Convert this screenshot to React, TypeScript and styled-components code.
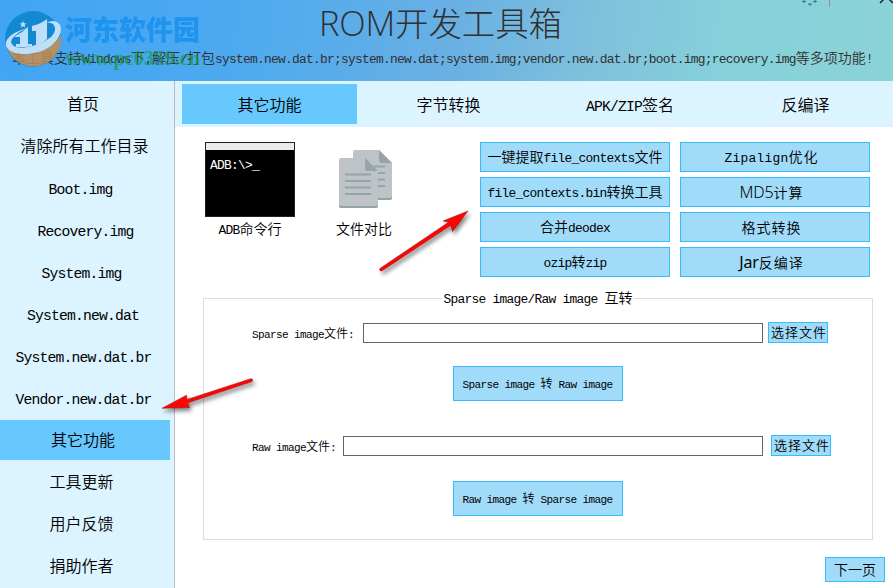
import React from "react";
import styled, { createGlobalStyle } from "styled-components";

const CJK = `"Noto Sans CJK SC"`;

const GlobalStyle = createGlobalStyle`
  *, *::before, *::after { box-sizing: border-box; }
  body { margin: 0; background: #fff; }
  button { appearance: none; cursor: pointer; margin: 0; }
`;

const Window = styled.div`
  position: relative;
  width: 893px;
  height: 588px;
  overflow: hidden;
  display: flex;
  flex-direction: column;
  background: #fff;
  color: #000;
  font-family: ${CJK}, sans-serif;
  font-weight: 350;
`;

/* Half-width runs: monospace letters tightened so that each advances half an ideograph. */
const Half = styled.span`
  font-family: "Liberation Mono", monospace;
  font-size: 0.92em;
  letter-spacing: calc(-0.0566em + var(--extra, 0px));
  font-weight: 400;
`;

const Run = styled.span`
  white-space: pre;
`;

function Mixed({ text }: { text: string }) {
  const parts = text.match(/[\x20-\x7e]+|[^\x20-\x7e]+/g) ?? [];
  return (
    <Run>
      {parts.map((p, i) =>
        /^[\x20-\x7e]/.test(p) ? <Half key={i}>{p}</Half> : p
      )}
    </Run>
  );
}

const Header = styled.header`
  position: relative;
  flex: none;
  height: 81px;
  background: linear-gradient(
    98deg,
    #41a5f5 0%,
    #4ba9f0 24%,
    #5cade9 40%,
    #68b0e4 50%,
    #7fc0dc 66%,
    #85d0da 80%,
    #8bd3d7 100%
  );
  color: #303030;
`;

const Title = styled.h1`
  margin: 0;
  padding: 0 0 0 319px;
  height: 45px;
  line-height: 44px;
  font-size: 33.4px;
  font-weight: 300;
  white-space: pre;
`;

const TitleLatin = styled.span`
  font-family: "Open Sans", sans-serif;
  font-size: 34.5px;
  letter-spacing: -0.2px;
`;

const Subtitle = styled.p`
  margin: 0;
  padding-left: 12px;
  height: 24px;
  line-height: 24px;
  font-size: 14px;
`;

const WindowControls = styled.svg`
  position: absolute;
  right: 0;
  top: 0;
`;

const Watermark = styled.div`
  position: absolute;
  left: 5px;
  top: 9px;
  display: flex;
`;

const WatermarkText = styled.div`
  display: flex;
  flex-direction: column;
  margin-left: 3px;
`;

const WatermarkName = styled.span`
  height: 37px;
  line-height: 40px;
  font-size: 27px;
  font-weight: 900;
  color: #1791ee;
  opacity: 0.85;
  white-space: nowrap;
`;

const WatermarkUrl = styled.span`
  height: 22px;
  line-height: 24px;
  font-family: "Liberation Serif", serif;
  font-size: 20.4px;
  font-weight: 700;
  color: #169a35;
  opacity: 0.62;
`;

const Body = styled.div`
  flex: 1;
  display: flex;
  min-height: 0;
`;

const Sidebar = styled.nav`
  width: 175px;
  flex: none;
  padding-top: 3px;
  display: flex;
  flex-direction: column;
  gap: 2px;
  background: #dcf4ff;
  border-right: 1px solid #bababf;
`;

const NavItem = styled.button<{ $active?: boolean; $center: number }>`
  flex: none;
  width: 170px;
  height: 40px;
  padding: 0 12px 0 ${(p) => (p.$center - 80) * 2}px;
  border: 0;
  background: ${(p) => (p.$active ? "#66c8fc" : "transparent")};
  font: inherit;
  font-size: 16px;
  line-height: 38px;
  color: #000;
  display: flex;
  justify-content: center;
`;

const Main = styled.main`
  flex: 1;
  display: flex;
  flex-direction: column;
`;

const Tabs = styled.div`
  flex: none;
  height: 46px;
  padding: 3px 0 3px 7px;
  display: grid;
  grid-template-columns: 175px 183px 180px 171px;
  background: #dcf4ff;
`;

const Tab = styled.button<{ $active?: boolean }>`
  height: 40px;
  padding: 0;
  border: 0;
  background: ${(p) => (p.$active ? "#66c8fc" : "transparent")};
  font: inherit;
  font-size: 16px;
  color: #000;
`;

const TopRow = styled.section`
  flex: none;
  display: flex;
  height: 155px;
  padding: 15px 23px 0 30px;
`;

const Tool = styled.figure<{ $width: number; $gap?: number }>`
  margin: 0 ${(p) => p.$gap ?? 0}px 0 0;
  width: ${(p) => p.$width}px;
  display: flex;
  flex-direction: column;
  align-items: center;
`;

const Terminal = styled.div`
  width: 90px;
  height: 75px;
  border: 1px solid #222;
  background: linear-gradient(#ebebeb 7px, #000 7px);
  color: #fff;
  padding: 9px 0 0 4px;
  font-size: 14px;
  line-height: 22px;
`;

const IconBox = styled.div`
  height: 75px;
  padding: 8px 0 0 2px;
`;

const Caption = styled.figcaption`
  margin-top: -1px;
  height: 24px;
  line-height: 24px;
  font-size: 14px;
  white-space: nowrap;
`;

const ButtonGrid = styled.div`
  margin-left: auto;
  display: grid;
  grid-template-columns: 190px 190px;
  grid-auto-rows: 30px;
  gap: 5px 10px;
`;

const ActionButton = styled.button<{ $spaced?: boolean }>`
  --extra: ${(p) => (p.$spaced ? "1px" : "0px")};
  display: flex;
  align-items: center;
  justify-content: center;
  padding: 0 ${(p) => (p.$spaced ? 7 : 0)}px 0 0;
  border: 1px solid #36bcfc;
  background: #a0dcfa;
  color: #000;
  font: inherit;
  font-size: 14px;
  line-height: 20px;
  letter-spacing: var(--extra);
  white-space: nowrap;
`;

const ConvertButton = styled(ActionButton)`
  width: 170px;
  height: 35px;
  padding: 0 1px 0 0;
  font-size: 12px;
`;

const PickButton = styled(ActionButton)`
  width: 60px;
  height: 21px;
  font-size: 13px;
  letter-spacing: 1px;
  padding: 0 0 1px 2px;
`;

const NextButton = styled(ActionButton)`
  width: 60px;
  height: 25px;
  padding-bottom: 1px;
`;

const Group = styled.fieldset`
  flex: none;
  width: 670px;
  height: 251px;
  margin: 7px 0 0 28px;
  padding: 0;
  border: 1px solid #dcdcdc;
  min-width: 0;
`;

const Legend = styled.legend`
  margin: 0 auto;
  padding: 0 2px;
  height: 18px;
  line-height: 16px;
  font-size: 14px;
`;

const FieldRow = styled.div<{ $top: number }>`
  display: flex;
  align-items: flex-end;
  height: 21px;
  margin: ${(p) => p.$top}px 0 0 48px;
`;

const Label = styled.label<{ $width: number }>`
  width: ${(p) => p.$width}px;
  height: 20px;
  line-height: 20px;
  font-size: 12px;
  white-space: nowrap;
`;

const PathInput = styled.input<{ $width: number; $gap: number }>`
  width: ${(p) => p.$width}px;
  height: 20px;
  margin: 0 ${(p) => p.$gap}px 0 0;
  padding: 0 4px;
  border: 1px solid #646464;
  border-radius: 0;
  background: #fff;
  font-size: 12px;
  outline: 0;
`;

const ActionRow = styled.div<{ $top: number }>`
  display: flex;
  margin: ${(p) => p.$top}px 0 0 249px;
`;

const Footer = styled.footer`
  display: flex;
  justify-content: flex-end;
  padding: 17px 8px 0 0;
`;

const Pointers = styled.svg`
  position: absolute;
  left: 0;
  top: 0;
  pointer-events: none;
  filter: drop-shadow(2px 3px 2px rgba(0, 0, 0, 0.5));
`;

const Sans = styled.span<{ $weight?: number }>`
  font-family: "Noto Sans", sans-serif;
  font-size: 16px;
  font-weight: ${(p) => p.$weight ?? 400};
  letter-spacing: -0.2px;
`;

const NAV: { label: string; center: number; active?: boolean }[] = [
  { label: "首页", center: 84 },
  { label: "清除所有工作目录", center: 85.5 },
  { label: "Boot.img", center: 81.5 },
  { label: "Recovery.img", center: 86.5 },
  { label: "System.img", center: 82.5 },
  { label: "System.new.dat", center: 84 },
  { label: "System.new.dat.br", center: 84.5 },
  { label: "Vendor.new.dat.br", center: 84.5 },
  { label: "其它功能", center: 84, active: true },
  { label: "工具更新", center: 82.5 },
  { label: "用户反馈", center: 82.5 },
  { label: "捐助作者", center: 82.5 },
];

const TABS = ["其它功能", "字节转换", "APK/ZIP签名", "反编译"];

function SiteLogo() {
  return (
    <svg width="57" height="60" viewBox="0 0 57 60" opacity="0.85">
      <circle cx="28" cy="30" r="28" fill="#0c85ce" />
      <path d="M1 36Q10 46 28 43Q48 39 56 26A28 28 0 0 1 1 36Z" fill="#c68d50" />
      <path
        d="M22 19Q7 26 6 33Q8 40 20 38.500Q36 36 46 28Q53 20 48 15Q45 13 41 14Q50 9 55 16Q58 23 51 32Q42 43 24 45Q5 46 1 37Q-1 26 22 19Z"
        fill="#d3eafc"
      />
      <path d="M10 27Q17 24 23 18V35H27V37Q18 39 11 38V35H15V28H10Z" fill="#d3eafc" />
      <path d="M27 17Q36 15 42 10V30Q38 34 31 36V22H27Z" fill="#d3eafc" />
      <path d="M18 12l1 2.200 2.400.3-1.800 1.600.5 2.400-2.100-1.200-2.100 1.200.5-2.400-1.800-1.600 2.400-.3z" fill="#d3eafc" />
    </svg>
  );
}

function DocumentsIcon() {
  return (
    <svg width="53" height="58" viewBox="0 0 53 58">
      <path d="M16 0H40L53 13V48a2 2 0 0 1-2 2H16a2 2 0 0 1-2-2V2a2 2 0 0 1 2-2Z" fill="#bdc3c7" />
      <path d="M14 47a2 2 0 0 0 2 1H51a2 2 0 0 0 2-2v2a2 2 0 0 1-2 2H16a2 2 0 0 1-2-2Z" fill="#95a5a5" />
      <path d="M40 0L53 13H42a2 2 0 0 1-2-2Z" fill="#95a5a5" />
      <path d="M33 15.500h13v2H33zM38 22h8v2h-8zM38 28.500h8v2h-8zM38 35h8v2h-8z" fill="#95a5a5" />
      <path d="M2 8H26L39 21V56a2 2 0 0 1-2 2H2a2 2 0 0 1-2-2V10a2 2 0 0 1 2-2Z" fill="#bdc3c7" />
      <path d="M0 54a2 2 0 0 0 2 2H37a2 2 0 0 0 2-2V56a2 2 0 0 1-2 2H2a2 2 0 0 1-2-2Z" fill="#95a5a5" />
      <path d="M26 8L39 21H28a2 2 0 0 1-2-2Z" fill="#95a5a5" />
      <path d="M6 23.500h26v2H6zM6 30h26v2H6zM6 36.500h26v2H6zM6 43h26v2H6z" fill="#95a5a5" />
    </svg>
  );
}

export default function App() {
  return (
    <Window>
      <GlobalStyle />
      <Header>
        <Title>
          <TitleLatin>ROM</TitleLatin>开发工具箱
        </Title>
        <Subtitle>
          <Mixed text="本工具支持Windows下,解压/打包system.new.dat.br;system.new.dat;system.img;vendor.new.dat.br;boot.img;recovery.img等多项功能!" />
        </Subtitle>
        <Watermark>
          <SiteLogo />
          <WatermarkText>
            <WatermarkName>河东软件园</WatermarkName>
            <WatermarkUrl>www.pc0359.cn</WatermarkUrl>
          </WatermarkText>
        </Watermark>
        <WindowControls width="93" height="10" viewBox="0 0 93 10">
          <path d="M2 1.500h4M4 0v3M13 1.500h4M15 0v3M8 4h4M9 5h2" stroke="#46789a" strokeWidth="1.2" fill="none" />
          <path d="M29.500 0V7" stroke="#a08c90" strokeWidth="1" />
          <path d="M80 3L84 -1M93 3L89 -1" stroke="#222" strokeWidth="1.5" />
        </WindowControls>
      </Header>
      <Body>
        <Sidebar>
          {NAV.map((n) => (
            <NavItem key={n.label} $active={n.active} $center={n.center}>
              <Mixed text={n.label} />
            </NavItem>
          ))}
        </Sidebar>
        <Main>
          <Tabs>
            {TABS.map((t, i) => (
              <Tab key={t} $active={i === 0}>
                <Mixed text={t} />
              </Tab>
            ))}
          </Tabs>
          <TopRow>
            <Tool $width={90} $gap={38}>
              <Terminal>
                <Mixed text="ADB:\>_" />
              </Terminal>
              <Caption>
                <Mixed text="ADB命令行" />
              </Caption>
            </Tool>
            <Tool $width={62}>
              <IconBox>
                <DocumentsIcon />
              </IconBox>
              <Caption>文件对比</Caption>
            </Tool>
            <ButtonGrid>
              <ActionButton><Mixed text="一键提取file_contexts文件" /></ActionButton>
              <ActionButton $spaced><Mixed text="Zipalign优化" /></ActionButton>
              <ActionButton><Mixed text="file_contexts.bin转换工具" /></ActionButton>
              <ActionButton $spaced><Sans $weight={300}>MD5</Sans>计算</ActionButton>
              <ActionButton><Mixed text="合并deodex" /></ActionButton>
              <ActionButton $spaced>格式转换</ActionButton>
              <ActionButton><Mixed text="ozip转zip" /></ActionButton>
              <ActionButton $spaced><Sans>Jar</Sans>反编译</ActionButton>
            </ButtonGrid>
          </TopRow>
          <Group>
            <Legend>
              <Mixed text="Sparse image/Raw image 互转" />
            </Legend>
            <FieldRow $top={15}>
              <Label $width={111}><Mixed text="Sparse image文件:" /></Label>
              <PathInput $width={400} $gap={5} />
              <PickButton>选择文件</PickButton>
            </FieldRow>
            <ActionRow $top={23}>
              <ConvertButton><Mixed text="Sparse image 转 Raw image" /></ConvertButton>
            </ActionRow>
            <FieldRow $top={34}>
              <Label $width={91}><Mixed text="Raw image文件:" /></Label>
              <PathInput $width={420} $gap={8} />
              <PickButton>选择文件</PickButton>
            </FieldRow>
            <ActionRow $top={25}>
              <ConvertButton><Mixed text="Raw image 转 Sparse image" /></ConvertButton>
            </ActionRow>
          </Group>
          <Footer>
            <NextButton>下一页</NextButton>
          </Footer>
        </Main>
      </Body>
      <Pointers width="893" height="588" viewBox="0 0 893 588">
        <path d="M380.300 268.200L448.500 222.200L443 221L468 211L452.500 231.500L450.800 225.300L382.200 270.700A1.500 1.500 0 0 1 380.300 268.200Z" fill="#fb0505" stroke="#a01010" strokeWidth="0.5" />
        <path d="M250.600 378.800L187 399.500L186.500 395.200L162 408.300L189.500 407.500L187.500 403L251.500 381.800A1.500 1.500 0 0 0 250.600 378.800Z" fill="#fb0505" stroke="#a01010" strokeWidth="0.5" />
      </Pointers>
    </Window>
  );
}
